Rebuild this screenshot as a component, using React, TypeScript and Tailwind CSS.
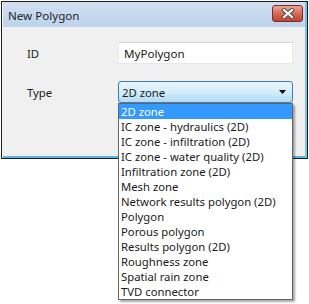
import React from "react";

const items = [
  "2D zone",
  "IC zone - hydraulics (2D)",
  "IC zone - infiltration (2D)",
  "IC zone - water quality (2D)",
  "Infiltration zone (2D)",
  "Mesh zone",
  "Network results polygon (2D)",
  "Polygon",
  "Porous polygon",
  "Results polygon (2D)",
  "Roughness zone",
  "Spatial rain zone",
  "TVD connector",
];

export default function App() {
  return (
    <div
      className="relative w-[309px] h-[304px] bg-white text-[11.3px] leading-[15px] text-[#1a1a1a] overflow-hidden"
      style={{ fontFamily: '"Noto Sans", "Open Sans", sans-serif' }}
    >
      <div className="ml-px mt-px w-[307px] h-[158px] border border-[#1c1c1c] flex flex-col">
        <div className="flex-1 flex flex-col border-l border-l-[#f4f7fb] border-r-2 border-r-[#7cc1ee]">
          {/* title bar */}
          <div className="h-[25px] flex items-center justify-between bg-gradient-to-b from-[#d2e0f0] to-[#bcd3ec] pl-[5px] pr-[2px]">
            <span className="text-[11.6px] text-[#1e1e1e] mt-[1px]">New Polygon</span>
            <div className="mb-[3px] w-[31px] h-[17px] rounded-[3px] border border-[#7e2b25] bg-gradient-to-b from-[#e8a898] via-[#d76a58] to-[#c2412f] flex items-center justify-center">
              <svg width="14" height="11" viewBox="0 0 14 11">
                <path d="M3 2 L11 9 M11 2 L3 9" stroke="#4a4a4a" strokeWidth="4" strokeLinecap="square" />
                <path d="M3 2 L11 9 M11 2 L3 9" stroke="#ffffff" strokeWidth="2.2" strokeLinecap="square" />
              </svg>
            </div>
          </div>
          {/* client */}
          <div className="flex-1 bg-[#f0f0f0] border-b-2 border-b-[#5fb3ea] pt-[15px] pl-[24px] flex flex-col">
            <div className="flex items-center">
              <span className="w-[91px]">ID</span>
              <div className="w-[175px] h-[22px] bg-white border border-[#e3e9ef] border-t-[#cfd6de] flex items-center pl-[5px] text-[11.6px]">
                MyPolygon
              </div>
            </div>
            <div className="flex items-center mt-[17px]">
              <span className="w-[91px]">Type</span>
              <div className="w-[175px] h-[22px] rounded-[3px] border border-[#3c7fb1] bg-gradient-to-b from-[#eaf6fd] via-[#d3edfb] to-[#b2dbf3] flex items-center justify-between pl-[3px] pr-[5px]">
                <span>2D zone</span>
                <svg width="8" height="5" viewBox="0 0 8 5">
                  <path d="M0 0 H7 L3.5 4 Z" fill="#000" />
                </svg>
              </div>
            </div>
          </div>
        </div>
      </div>

      {/* dropdown list */}
      <div className="absolute left-[118px] top-[103px] w-[175px] bg-white border border-[#646464] shadow-[2px_2px_2px_rgba(0,0,0,0.35)] flex flex-col">
        {items.map((it, i) => (
          <div
            key={it}
            className={
              i === 0
                ? "h-[15px] flex items-center pl-[2px] bg-[#3399ff] text-white"
                : "h-[15px] flex items-center pl-[2px] text-[#1a1a1a]"
            }
          >
            {it}
          </div>
        ))}
      </div>
    </div>
  );
}
